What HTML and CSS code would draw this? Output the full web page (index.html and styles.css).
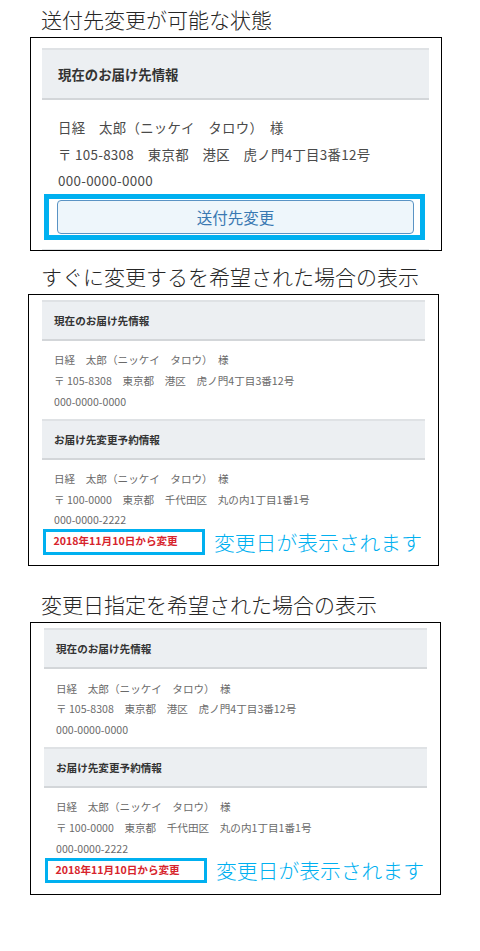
FILE: index.html
```html
<!DOCTYPE html>
<html lang="ja">
<head>
    <meta charset="UTF-8">
    <meta name="viewport" content="width=device-width, initial-scale=1.0">
    <title>送付先変更</title>
    <link rel="stylesheet" href="styles.css">
</head>
<body>
    <section class="case case-edit">
        <h2 class="case-title">送付先変更が可能な状態</h2>
        <div class="frame frame-lg">
            <div class="panel-head">現在のお届け先情報</div>
            <div class="panel-body">
                <p>日経　太郎（ニッケイ　タロウ）　様</p>
                <p>〒 105-8308　東京都　港区　虎ノ門4丁目3番12号</p>
                <p>000-0000-0000</p>
            </div>
            <div class="mark">
                <button class="change-btn">送付先変更</button>
            </div>
            <div class="panel-head panel-head-cut"></div>
        </div>
    </section>

    <section class="case case-now">
        <h2 class="case-title">すぐに変更するを希望された場合の表示</h2>
        <div class="frame frame-sm">
            <div class="panel-head">現在のお届け先情報</div>
            <div class="panel-body">
                <p>日経　太郎（ニッケイ　タロウ）　様</p>
                <p>〒 105-8308　東京都　港区　虎ノ門4丁目3番12号</p>
                <p>000-0000-0000</p>
            </div>
            <div class="panel-head panel-head-next">お届け先変更予約情報</div>
            <div class="panel-body">
                <p>日経　太郎（ニッケイ　タロウ）　様</p>
                <p>〒 100-0000　東京都　千代田区　丸の内1丁目1番1号</p>
                <p>000-0000-2222</p>
                <div class="note">
                    <span class="note-date">2018年11月10日から変更</span>
                    <span class="note-label">変更日が表示されます</span>
                </div>
            </div>
        </div>
    </section>

    <section class="case case-date">
        <h2 class="case-title">変更日指定を希望された場合の表示</h2>
        <div class="frame frame-sm">
            <div class="panel-head">現在のお届け先情報</div>
            <div class="panel-body">
                <p>日経　太郎（ニッケイ　タロウ）　様</p>
                <p>〒 105-8308　東京都　港区　虎ノ門4丁目3番12号</p>
                <p>000-0000-0000</p>
            </div>
            <div class="panel-head panel-head-next">お届け先変更予約情報</div>
            <div class="panel-body">
                <p>日経　太郎（ニッケイ　タロウ）　様</p>
                <p>〒 100-0000　東京都　千代田区　丸の内1丁目1番1号</p>
                <p>000-0000-2222</p>
                <div class="note">
                    <span class="note-date">2018年11月10日から変更</span>
                    <span class="note-label">変更日が表示されます</span>
                </div>
            </div>
        </div>
    </section>
</body>
</html>
```

FILE: styles.css
```css
* {
    box-sizing: border-box;
}

body {
    margin: 0;
    font-family: "Noto Sans CJK JP", "Noto Sans", sans-serif;
    background: #fff;
    color: #333;
}

p {
    margin: 0;
}

/* each case: title + black frame */
.case-edit {
    padding-top: 5px;
}

.case-now {
    margin-top: 11px;
}

.case-date {
    margin-top: 24px;
}

.case-title {
    margin: 0 0 4px 41px;
    font-size: 21px;
    font-weight: 300;
    line-height: 28px;
    color: #262626;
    white-space: nowrap;
}

.frame {
    border: 1px solid #000;
    background: #fff;
}

.panel-head {
    display: flex;
    align-items: center;
    background: #eceff2;
    border-top: 2px solid #dfe2e5;
    border-bottom: 2px solid #d3d6d9;
    font-weight: 700;
    color: #333;
}

/* large frame */
.frame-lg {
    margin-left: 30px;
    width: 412px;
    height: 214px;
    padding: 10px 12px 0 11px;
    overflow: hidden;
}

.frame-lg .panel-head {
    height: 52px;
    padding-left: 16px;
    font-size: 13.4px;
}

.frame-lg .panel-body {
    padding: 14px 0 0 16px;
    font-size: 13.4px;
    line-height: 26.5px;
    letter-spacing: 0.3px;
    color: #4a4a4a;
    white-space: nowrap;
}

.mark {
    margin: 0 4px 0 2px;
    border: 5px solid #00b0f0;
    padding: 1px 6px 1px 8px;
}

.change-btn {
    display: block;
    width: 100%;
    height: 34px;
    border: 1px solid #5a93c4;
    border-radius: 4px;
    background: #eef6fb;
    color: #3a79b2;
    font-family: inherit;
    font-size: 15.5px;
    padding: 0;
}

.panel-head-cut {
    margin-top: 9.5px;
}

/* small frames */
.frame-sm {
    width: 411px;
    padding: 5px 13px 10.4px 13px;
}

.case-now .frame-sm {
    margin-left: 28px;
}

.case-date .frame-sm {
    margin-left: 30px;
}

.frame-sm .panel-head {
    height: 41px;
    padding-left: 12px;
    font-size: 10.6px;
}

.frame-sm .panel-head-next {
    margin-top: 6px;
}

.frame-sm .panel-body {
    padding-top: 9.4px;
    font-size: 10.6px;
    line-height: 20.7px;
    color: #6a6a6a;
    white-space: nowrap;
}

.frame-sm .panel-body p {
    padding-left: 12px;
}

.note {
    display: flex;
    align-items: center;
    margin-top: -2px;
    margin-left: 1px;
}

.note-date {
    width: 162px;
    height: 25.4px;
    border: 3.5px solid #00b0f0;
    padding-left: 7.5px;
    line-height: 17px;
    font-weight: 700;
    color: #d7242c;
}

.note-label {
    margin-left: 9px;
    font-size: 20.8px;
    font-weight: 300;
    line-height: 26px;
    color: #00b0f0;
}
```
